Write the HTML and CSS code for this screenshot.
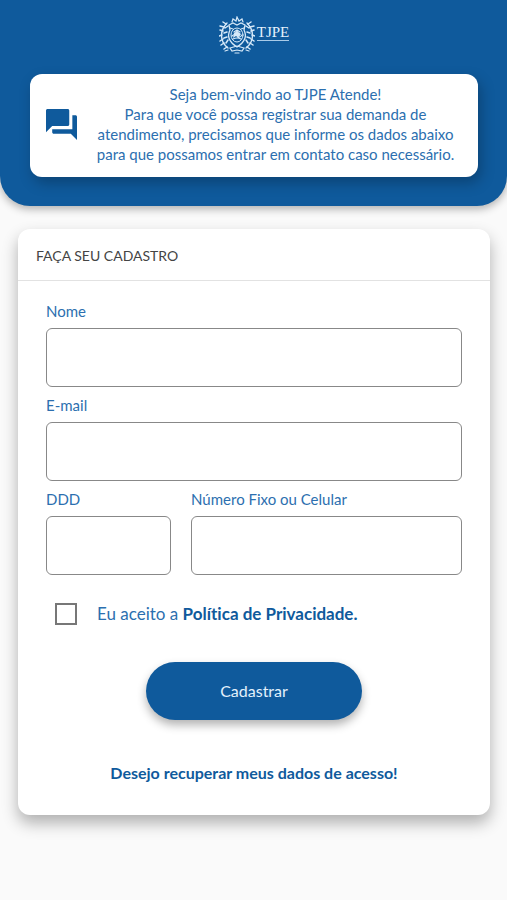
FILE: index.html
```html
<!DOCTYPE html>
<html lang="pt-BR">
<head>
    <meta charset="UTF-8">
    <meta name="viewport" content="width=device-width, initial-scale=1.0">
    <title>TJPE Atende</title>
    <link rel="stylesheet" href="styles.css">
</head>
<body>
    <header class="topo">
        <div class="logo">
            <svg class="brasao" viewBox="0 0 36 38" aria-hidden="true">
                <g fill="none" stroke="#d5e8f8" stroke-linecap="round">
                    <!-- ramos -->
                    <path d="M8 7C1 14 0 25 9 32M28 7c7 7 8 18-1 25" stroke-width="1.4"/>
                    <path d="M7 8L4 6M5 11L1 10M4 15l-3-1M3 19l-3 1M4 23l-3 2M5 27l-3 2M8 31l-3 2M6 12l3-2M5 17l3-1M5 22l3-1M7 27l2-3M29 8l3-2M31 11l4-1M32 15l3-1M33 19l3 1M32 23l3 2M31 27l3 2M28 31l3 2M30 12l-3-2M31 17l-3-1M31 22l-3-1M29 27l-2-3" stroke-width="1.5"/>
                    <!-- escudo -->
                    <path d="M10 9l4-2 4 2 4-2 4 2-1 5c3 6 1 12-7 17-8-5-10-11-7-17z" stroke-width="1.3"/>
                    <ellipse cx="18" cy="19" rx="6" ry="7"/>
                    <path d="M13 20q3-3 5 0t5-1M14 23q4-2 8 0M15 16l3-2 3 2M18 14v5M11 12l3 1M25 12l-3 1" stroke-width="1.2"/>
                    <!-- coroa e faixa -->
                    <path d="M13 6l1-3 3 2 1-4 2 4 3-2 1 3M11 32l7-2 7 2-2 3-5-1-5 1zM9 34l-3 1M27 34l3 1M16 37h4" stroke-width="1.2"/>
                </g>
                <path d="M15 17l3-2 4 3-2 3-3-1-3 2z" fill="#d5e8f8"/>
            </svg>
            <span class="sigla">TJPE</span>
        </div>
        <div class="aviso">
            <svg class="chat" viewBox="2 2 20 20" aria-hidden="true">
                <path fill="#0f5a9c" d="M21 6h-2v9H6v2c0 .55.45 1 1 1h11l4 4V7c0-.55-.45-1-1-1zm-4 6V3c0-.55-.45-1-1-1H3c-.55 0-1 .45-1 1v14l4-4h10c.55 0 1-.45 1-1z"/>
            </svg>
            <p class="aviso-texto">
                Seja bem-vindo ao TJPE Atende!<br>
                Para que você possa registrar sua demanda de<br>
                atendimento, precisamos que informe os dados abaixo<br>
                para que possamos entrar em contato caso necessário.
            </p>
        </div>
    </header>

    <main class="cartao">
        <h1 class="titulo">FAÇA SEU CADASTRO</h1>
        <form class="cadastro">
            <div class="campo">
                <label for="nome">Nome</label>
                <input type="text" id="nome" name="nome">
            </div>
            <div class="campo">
                <label for="email">E-mail</label>
                <input type="email" id="email" name="email">
            </div>
            <div class="telefone">
                <div class="campo">
                    <label for="ddd">DDD</label>
                    <input type="tel" id="ddd" name="ddd">
                </div>
                <div class="campo">
                    <label for="numero">Número Fixo ou Celular</label>
                    <input type="tel" id="numero" name="numero">
                </div>
            </div>
            <div class="aceite">
                <input type="checkbox" id="aceito" name="aceito">
                <label for="aceito">Eu aceito a <a href="#politica">Política de Privacidade.</a></label>
            </div>
            <button type="submit" class="enviar">Cadastrar</button>
            <a class="recuperar" href="#recuperar">Desejo recuperar meus dados de acesso!</a>
        </form>
    </main>
</body>
</html>
```
FILE: styles.css
```css
* {
    box-sizing: border-box;
}

body {
    min-height: 100vh;
    margin: 0;
    padding-bottom: 40px;
    background: #fafafa;
    color: #2c6faf;
    font: 15px/20px Lato, "Open Sans", sans-serif;
    font-variant-ligatures: none;
}

a {
    color: #0f5a9c;
    font-weight: bold;
    text-decoration: none;
}

/* topo */
.topo {
    padding: 16px 29px 29px 30px;
    border-radius: 0 0 30px 30px;
    background: #0f5a9c;
    box-shadow: 0 3px 8px rgba(0, 0, 0, 0.3);
}

.logo {
    display: flex;
    justify-content: center;
    gap: 2px;
    margin-bottom: 20px;
}

.brasao {
    width: 36px;
    height: 38px;
}

.sigla {
    align-self: flex-start;
    margin-top: 8px;
    border-bottom: 1px solid #a9cbe8;
    color: #e3f1fc;
    font: 15px/16px "Liberation Serif", serif;
}

.aviso {
    display: flex;
    align-items: center;
    gap: 12px;
    padding: 10px 16px 13px;
    border-radius: 12px;
    background: #fff;
    box-shadow: 3px 6px 14px rgba(0, 0, 0, 0.25);
}

.chat {
    flex: none;
    width: 31px;
    height: 31px;
}

.aviso-texto {
    flex: 1;
    margin: 0;
    text-align: center;
}

/* cadastro */
.cartao {
    margin: 23px 17px 0 18px;
    border-radius: 12px;
    background: #fff;
    box-shadow: 0 8px 16px rgba(0, 0, 0, 0.3);
}

.titulo {
    margin: 0;
    padding: 17px 18px 14px;
    border-bottom: 1px solid #e2e2e2;
    color: #444;
    font-size: 14px;
    font-weight: normal;
}

.cadastro {
    display: flex;
    flex-direction: column;
    gap: 8px;
    padding: 20px 28px 32px;
}

.campo {
    display: flex;
    flex-direction: column;
    gap: 7px;
}

.campo input {
    width: 100%;
    height: 59px;
    padding: 0 12px;
    border: 1px solid #888;
    border-radius: 6px;
    background: #fff;
    color: #444;
    font: inherit;
}

.telefone {
    display: grid;
    grid-template-columns: 6fr 13fr;
    gap: 20px;
}

.aceite {
    display: flex;
    align-items: center;
    gap: 20px;
    margin: 20px 9px 0;
    font-size: 17px;
}

.aceite input {
    appearance: none;
    width: 22px;
    height: 22px;
    margin: 0;
    border: 2px solid #777;
    background: #fff;
}

.aceite input:checked {
    background: #0f5a9c;
}

.enviar {
    align-self: center;
    width: 52%;
    height: 58px;
    margin-top: 29px;
    border: none;
    border-radius: 29px;
    background: #0f5a9c;
    box-shadow: 0 5px 10px rgba(0, 0, 0, 0.3);
    color: #e3f1fc;
    font: inherit;
    font-size: 16px;
}

.recuperar {
    align-self: center;
    margin-top: 35px;
    font-size: 16px;
}
```
